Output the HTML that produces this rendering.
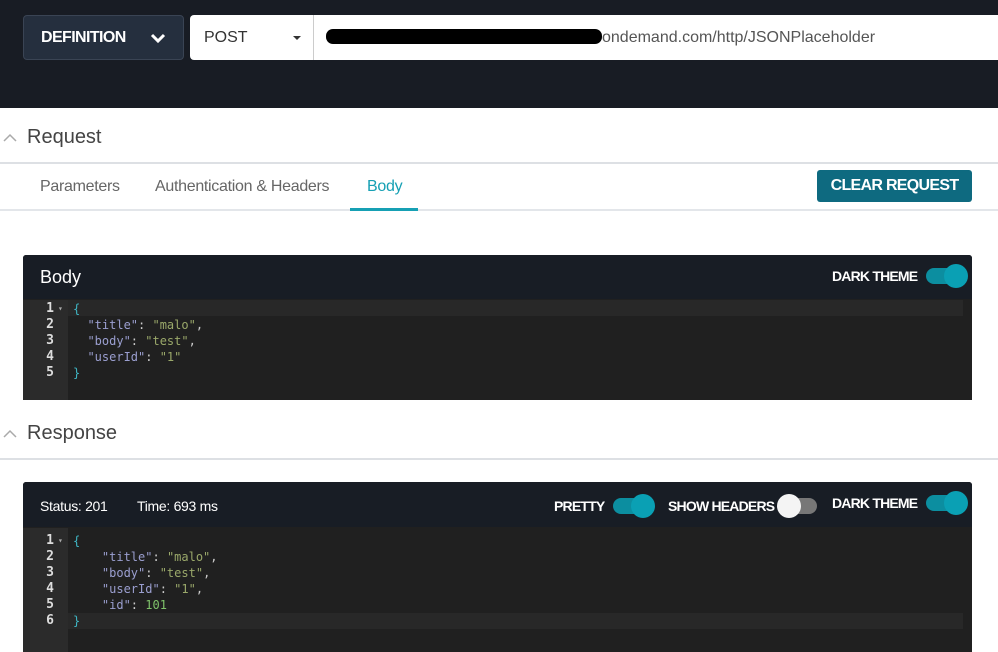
<!DOCTYPE html>
<html><head><style>
*{margin:0;padding:0;box-sizing:border-box}
body{width:998px;height:652px;overflow:hidden;background:#fff;font-family:"Liberation Sans",sans-serif;position:relative}
.a{position:absolute}
.mono{font-family:"DejaVu Sans Mono","Liberation Mono",monospace;font-size:12px;line-height:16px}
.k{color:#9b9fd0}.s{color:#9aa86a}.p{color:#ccc}.n{color:#7fc26a}.b{color:#3fb6c4}
.tog{position:absolute;width:38px;height:16px;border-radius:8px;background:#0c8ea0}
.tog i{position:absolute;right:-4px;top:-4px;width:24px;height:24px;border-radius:50%;background:#0aa0b4}
.lb{font-size:14px;font-weight:bold;color:#fff;letter-spacing:-0.8px}
.t{font-size:16px;color:#666;letter-spacing:-0.3px}
</style></head><body>
<div class="a" style="left:0;top:0;width:998px;height:108px;background:#181c24"></div>
<div class="a" style="left:23px;top:15px;width:161px;height:45px;background:#252f3e;border:1px solid #3a4454;border-radius:4px;color:#fff;font-size:16px;font-weight:bold;line-height:43px;padding-left:17px;letter-spacing:-0.6px">DEFINITION
<svg class="a" style="left:126px;top:16px" width="16" height="12" viewBox="0 0 16 12"><path d="M2 3l6 6 6-6" stroke="#fff" stroke-width="3" fill="none"/></svg></div>
<div class="a" style="left:190px;top:15px;width:808px;height:45px;background:#fff;border-radius:4px 0 0 4px"></div>
<div class="a" style="left:204px;top:15px;line-height:45px;font-size:16px;color:#333">POST</div>
<div class="a" style="left:293px;top:36px;border-left:4px solid transparent;border-right:4px solid transparent;border-top:4px solid #333"></div>
<div class="a" style="left:313px;top:15px;width:1px;height:45px;background:#ccc"></div>
<div class="a" style="left:326px;top:29px;width:276px;height:15px;background:#000;border-radius:7px"></div>
<div class="a" style="left:602px;top:15px;line-height:45px;font-size:16px;color:#555">ondemand.com/http/JSONPlaceholder</div>

<svg class="a" style="left:3px;top:133px" width="14" height="10"><path d="M1 8l6-6 6 6" stroke="#aaa" stroke-width="1.5" fill="none"/></svg>
<div class="a" style="left:27px;top:126px;font-size:20px;color:#444">Request</div>
<div class="a" style="left:0;top:162px;width:998px;height:2px;background:#dde0e4"></div>
<div class="a t" style="left:40px;top:178px">Parameters</div>
<div class="a t" style="left:155px;top:178px">Authentication &amp; Headers</div>
<div class="a t" style="left:367px;top:178px;color:#16a0b4">Body</div>
<div class="a" style="left:0;top:209px;width:998px;height:2px;background:#e3e6ea"></div>
<div class="a" style="left:350px;top:208px;width:68px;height:3px;background:#16a0b4"></div>
<div class="a" style="left:817px;top:170px;width:155px;height:32px;background:#0e6a80;border-radius:3px;color:#fff;font-weight:bold;font-size:16px;letter-spacing:-0.7px;text-align:center;line-height:32px">CLEAR REQUEST</div>

<div class="a" style="left:23px;top:255px;width:949px;height:145px;background:#202020;border-radius:3px 3px 0 0;overflow:hidden">
<div class="a" style="left:0;top:0;width:949px;height:44px;background:#181d25"></div>
<div class="a" style="left:17px;top:12px;font-size:18px;color:#fff">Body</div>
<div class="a lb" style="left:809px;top:13px">DARK THEME</div>
<div class="tog" style="left:903px;top:13px"><i></i></div>
<div class="a" style="left:0;top:45px;width:45px;height:100px;background:#2b2b2b"></div>
<div class="a" style="left:45px;top:45px;width:895px;height:16px;background:#282828"></div>
<div class="a mono" style="left:0;top:46px;width:31px;text-align:right;color:#ddd;font-weight:bold;font-size:13px">1<br>2<br>3<br>4<br>5</div>
<div class="a mono" style="left:35px;top:46px;color:#aaa;font-size:8px">▾</div>
<div class="a mono" style="left:50px;top:46px;white-space:pre"><span class="b">{</span>
<span class="k">  "title"</span><span class="p">: </span><span class="s">"malo"</span><span class="p">,</span>
<span class="k">  "body"</span><span class="p">: </span><span class="s">"test"</span><span class="p">,</span>
<span class="k">  "userId"</span><span class="p">: </span><span class="s">"1"</span>
<span class="b">}</span></div>
</div>

<svg class="a" style="left:3px;top:429px" width="14" height="10"><path d="M1 8l6-6 6 6" stroke="#aaa" stroke-width="1.5" fill="none"/></svg>
<div class="a" style="left:27px;top:422px;font-size:20px;color:#444">Response</div>
<div class="a" style="left:0;top:458px;width:998px;height:2px;background:#dde0e4"></div>

<div class="a" style="left:23px;top:482px;width:949px;height:170px;background:#202020;border-radius:3px 3px 0 0;overflow:hidden">
<div class="a" style="left:0;top:0;width:949px;height:45px;background:#181d25"></div>
<div class="a" style="left:17px;top:16px;font-size:14px;color:#fff;letter-spacing:-0.3px">Status: 201</div>
<div class="a" style="left:114px;top:16px;font-size:14px;color:#fff;letter-spacing:-0.3px">Time: 693 ms</div>
<div class="a lb" style="left:531px;top:16px">PRETTY</div>
<div class="tog" style="left:590px;top:16px"><i></i></div>
<div class="a lb" style="left:645px;top:16px">SHOW HEADERS</div>
<div class="a" style="left:756px;top:16px;width:38px;height:16px;border-radius:8px;background:#777"></div>
<div class="a" style="left:754px;top:12px;width:24px;height:24px;border-radius:50%;background:#f4f4f4"></div>
<div class="a lb" style="left:809px;top:13px">DARK THEME</div>
<div class="tog" style="left:903px;top:13px"><i></i></div>
<div class="a" style="left:0;top:46px;width:45px;height:124px;background:#2b2b2b"></div>
<div class="a" style="left:45px;top:131px;width:895px;height:16px;background:#282828"></div>
<div class="a mono" style="left:0;top:51px;width:31px;text-align:right;color:#ddd;font-weight:bold;font-size:13px">1<br>2<br>3<br>4<br>5<br>6</div>
<div class="a mono" style="left:35px;top:51px;color:#aaa;font-size:8px">▾</div>
<div class="a mono" style="left:50px;top:51px;white-space:pre"><span class="b">{</span>
<span class="k">    "title"</span><span class="p">: </span><span class="s">"malo"</span><span class="p">,</span>
<span class="k">    "body"</span><span class="p">: </span><span class="s">"test"</span><span class="p">,</span>
<span class="k">    "userId"</span><span class="p">: </span><span class="s">"1"</span><span class="p">,</span>
<span class="k">    "id"</span><span class="p">: </span><span class="n">101</span>
<span class="b">}</span></div>
</div>
</body></html>
